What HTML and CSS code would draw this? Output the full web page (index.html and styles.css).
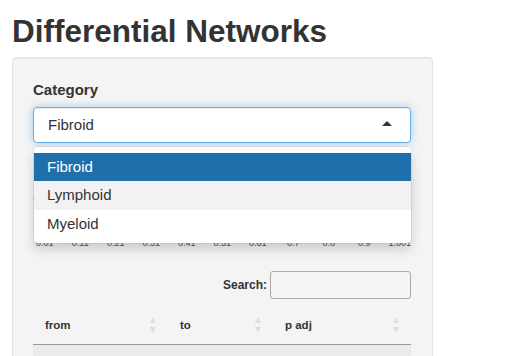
FILE: index.html
```html
<!DOCTYPE html>
<html lang="en">
<head>
    <meta charset="UTF-8">
    <meta name="viewport" content="width=device-width, initial-scale=1.0">
    <title>Differential Networks</title>
    <link rel="stylesheet" href="styles.css">
</head>
<body>
    <div class="page">
        <h1 class="title">Differential Networks</h1>

        <div class="well">
            <div class="form-group">
                <label class="control-label">Category</label>
                <div class="select-wrap">
                    <div class="select-input">
                        <span>Fibroid</span>
                        <span class="caret-up"></span>
                    </div>
                    <div class="select-dropdown">
                        <div class="option active">Fibroid</div>
                        <div class="option hover">Lymphoid</div>
                        <div class="option">Myeloid</div>
                    </div>
                </div>
            </div>

            <div class="slider-group">
                <div class="slider-track"><div class="slider-bar"></div></div>
                <div class="slider-grid">
                    <span>0.01</span><span>0.11</span><span>0.21</span><span>0.31</span>
                    <span>0.41</span><span>0.51</span><span>0.61</span><span>0.7</span>
                    <span>0.8</span><span>0.9</span><span>1.001</span>
                </div>
            </div>

            <div class="search-row">
                <label for="search">Search:</label>
                <input type="search" id="search">
            </div>

            <table class="data-table">
                <colgroup>
                    <col class="col-from">
                    <col class="col-to">
                    <col class="col-padj">
                </colgroup>
                <thead>
                    <tr>
                        <th>from<span class="sort"></span></th>
                        <th>to<span class="sort"></span></th>
                        <th>p adj<span class="sort"></span></th>
                    </tr>
                </thead>
                <tbody>
                    <tr class="odd"><td></td><td></td><td></td></tr>
                </tbody>
            </table>
        </div>
    </div>
</body>
</html>
```

FILE: styles.css
```css
body {
    margin: 0;
    font-family: "Liberation Sans", Arial, sans-serif;
    color: #333;
    background-color: #fff;
}
.page {
    padding: 0 12px;
}
.title {
    font-size: 31.5px;
    font-weight: bold;
    line-height: 1.1;
    margin: 14px 0 8px 0;
}
.well {
    width: 421px;
    box-sizing: border-box;
    padding: 22px 21px 20px 20px;
    background-color: #f4f4f4;
    border: 1px solid #e3e3e3;
    border-radius: 4px;
    box-shadow: inset 0 1px 1px rgba(0, 0, 0, 0.05);
}
.control-label {
    display: block;
    font-size: 15px;
    font-weight: bold;
    line-height: 20px;
    margin-bottom: 7px;
}
.select-wrap {
    position: relative;
}
.select-input {
    display: flex;
    align-items: center;
    justify-content: space-between;
    height: 36px;
    box-sizing: border-box;
    padding: 0 18px 0 14px;
    font-size: 15px;
    background-color: #fff;
    border: 1px solid #66afe9;
    border-radius: 4px;
    box-shadow: inset 0 1px 1px rgba(0, 0, 0, 0.075), 0 0 8px rgba(102, 175, 233, 0.6);
}
.caret-up {
    width: 0;
    height: 0;
    border-left: 5px solid transparent;
    border-right: 5px solid transparent;
    border-bottom: 5px solid #333;
    margin-top: -2px;
}
.select-dropdown {
    position: absolute;
    top: 40px;
    left: 1px;
    right: 0;
    z-index: 10;
    padding: 6px 0 5px 0;
    background-color: #fff;
    border-radius: 4px;
    box-shadow: 0 0 0 1px rgba(0, 0, 0, 0.05), 0 6px 12px rgba(0, 0, 0, 0.175);
}
.option {
    padding: 4px 14px 4px 13px;
    font-size: 15px;
    line-height: 20.5px;
}
.option.active {
    background-color: #1f6faa;
    color: #fff;
}
.option.hover {
    background-color: #f2f2f2;
}
.slider-group {
    margin-top: 15px;
}
.slider-track {
    height: 80px;
    display: flex;
    align-items: center;
}
.slider-bar {
    width: 100%;
    height: 8px;
    background-color: #ddd;
    border-radius: 4px;
}
.slider-grid {
    display: flex;
    margin: 0 -6px;
    font-size: 9px;
    line-height: 10px;
    color: #555;
}
.slider-grid span {
    flex: 0 0 35.5px;
    text-align: center;
    white-space: nowrap;
}
.search-row {
    display: flex;
    justify-content: flex-end;
    align-items: center;
    gap: 3px;
    margin-top: 23px;
}
.search-row label {
    font-size: 12px;
    font-weight: bold;
}
.search-row input {
    width: 141px;
    height: 28px;
    box-sizing: border-box;
    border: 1px solid #aaa;
    border-radius: 3px;
    background-color: transparent;
}
.data-table {
    width: 100%;
    margin-top: 6px;
    border-collapse: collapse;
    table-layout: fixed;
}
.col-from {
    width: 135px;
}
.col-to {
    width: 105px;
}
.data-table th {
    position: relative;
    text-align: left;
    font-size: 11.5px;
    font-weight: bold;
    line-height: 20px;
    padding: 10px 18px 9px 12px;
    border-bottom: 1px solid #999;
}
.sort {
    position: absolute;
    right: 12px;
    top: 12px;
    width: 6px;
    height: 16px;
}
.sort::before,
.sort::after {
    content: "";
    position: absolute;
    left: 0;
    width: 0;
    height: 0;
    border-left: 3px solid transparent;
    border-right: 3px solid transparent;
}
.sort::before {
    top: 0;
    border-bottom: 6px solid #ddd;
}
.sort::after {
    bottom: 0;
    border-top: 6px solid #ddd;
}
.data-table td {
    height: 30px;
    padding: 0;
}
.data-table tr.odd td {
    background-color: #ebebeb;
}
```
